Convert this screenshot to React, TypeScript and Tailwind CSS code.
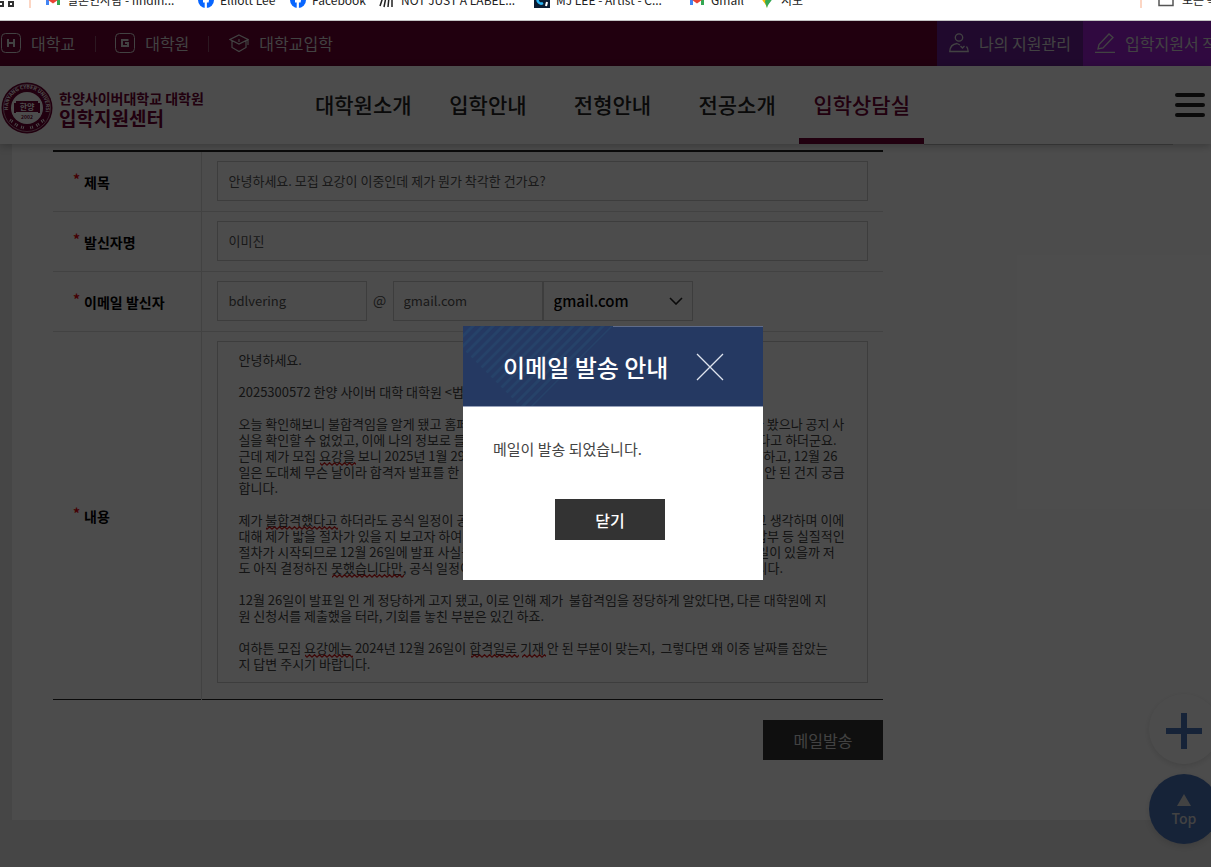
import { useState } from "react";
import type { ReactNode } from "react";

const message = `안녕하세요.

2025300572 한양 사이버 대학 대학원 <법학과> 지원자입니다.

오늘 확인해보니 불합격임을 알게 됐고 홈페이지 공지사항과 게시판까지 모집 요강을 모두 다시 찾아 봤으나 공지 사
실을 확인할 수 없었고, 이에 나의 정보로 들어가 합격 여부 조회를 해보니, 이미 12월에 발표가 되었다고 하더군요.
근데 제가 모집 요강을 보니 2025년 1월 29일에 최종 합격자 발표를 한다고 공식적으로 되어 있기도 하고, 12월 26
일은 도대체 무슨 날이라 합격자 발표를 한 것인지, 왜 공식적인 일정에는 전혀 저에게는 따로 안내가 안 된 건지 궁금
합니다.

제가 불합격했다고 하더라도 공식 일정이 공개되어 있고 그에 맞게 지원자가 모두 준비를 해야 한다고 생각하며 이에
대해 제가 밟을 절차가 있을 지 보고자 하여 이와 같이 연락을 드립니다. 최종 합격자는 모두 등록금 납부 등 실질적인
절차가 시작되므로 12월 26일에 발표 사실을 미리 알았다면, 다른 대학원 등록 같은 방법을 찾아 볼 일이 있을까 저
도 아직 결정하진 못했습니다만, 공식 일정이 어떻게 되는지를 먼저 이렇게 정확하게 확인하고 싶습니다.

12월 26일이 발표일 인 게 정당하게 고지 됐고, 이로 인해 제가  불합격임을 정당하게 알았다면, 다른 대학원에 지
원 신청서를 제출했을 터라, 기회를 놓친 부분은 있긴 하죠.

여하튼 모집 요강에는 2024년 12월 26일이 합격일로 기재 안 된 부분이 맞는지,  그렇다면 왜 이중 날짜를 잡았는
지 답변 주시기 바랍니다.`;

// spelling marks: x, y, width inside the message box
const marks = [
  [103, 121, 36],
  [49, 185, 72],
  [115, 233, 72],
  [88, 313, 48],
  [254, 313, 48],
  [305, 313, 24],
];

function Gmail() {
  return (
    <svg width="16" height="16" viewBox="0 0 16 16" className="shrink-0">
      <path d="M1 3v10h3V7z" fill="#4285f4" />
      <path d="M15 3v10h-3V7z" fill="#34a853" />
      <path d="M1 3l7 5 7-5v3.500l-7 5-7-5z" fill="#ea4335" />
    </svg>
  );
}

function Facebook() {
  return (
    <svg width="16" height="16" viewBox="0 0 16 16" className="shrink-0">
      <circle cx="8" cy="8" r="8" fill="#0866ff" />
      <path d="M6.700 16v-5.500H5V8h1.700V6.600C6.700 4.500 7.700 3.500 9.700 3.500l1.300.1v2.200h-.9c-.9 0-1.200.4-1.200 1.200v1h2.100l-.4 2.500H8.900V16z" fill="#fff" />
    </svg>
  );
}

function Bookmark({ icon, label, width }: { icon: ReactNode; label: string; width: string }) {
  return (
    <a href="#" className="flex shrink-0 items-center gap-[6px]">
      {icon}
      <span className={`${width} whitespace-nowrap`}>{label}</span>
    </a>
  );
}

function BookmarkBar() {
  return (
    <div className="h-[21px] overflow-hidden border-b border-[#c4c4c4] bg-white text-xs text-[#222]">
      <div className="-mt-4 flex h-8 items-center">
        <svg width="14" height="14" viewBox="0 0 14 14" fill="none" stroke="#333" strokeWidth="2" className="shrink-0">
          <path d="M-3 1h6v4h-6zM9 1h4v4H9zM-3 9h6v4h-6zM9 9h4v4H9z" />
        </svg>
        <span className="ml-[15px] h-4 w-[2px] shrink-0 bg-[#fcd6c4]" />
        <div className="ml-[14px] flex items-center gap-4">
          <Bookmark icon={<Gmail />} label="일본인사람 - findin..." width="w-[115px]" />
          <Bookmark icon={<Facebook />} label="Elliott Lee" width="w-[54px]" />
          <Bookmark icon={<Facebook />} label="Facebook" width="w-[51px]" />
          <Bookmark
            icon={
              <svg width="16" height="16" viewBox="0 0 16 16" stroke="#222" strokeWidth="1.500" className="shrink-0">
                <path d="M4 5L1 14M7 5L5 15M10 5L9 15M13 4v11M3 7h12" />
              </svg>
            }
            label="NOT JUST A LABEL..."
            width="w-[117px]"
          />
          <Bookmark
            icon={
              <svg width="16" height="16" viewBox="0 0 16 16" fill="none" className="shrink-0">
                <path d="M0 0h16v16H0z" fill="#0a1c33" />
                <path d="M9 5a3.500 3.500 0 1 0 0 6" stroke="#29b6f6" strokeWidth="2.500" />
                <path d="M13 10l-1 4" stroke="#fff" strokeWidth="2" />
              </svg>
            }
            label="MJ LEE - Artist - C..."
            width="w-[117px]"
          />
          <Bookmark icon={<Gmail />} label="Gmail" width="w-8" />
          <Bookmark
            icon={
              <svg width="16" height="16" viewBox="0 0 16 16" className="shrink-0">
                <path d="M8 0a5.500 5.500 0 0 0-5.500 5.500C2.500 9 7 11 8 16z" fill="#fbbc04" />
                <path d="M8 0a5.500 5.500 0 0 1 5.500 5.500C13.500 9 9 11 8 16L6 10z" fill="#34a853" />
              </svg>
            }
            label="지도"
            width="w-8"
          />
        </div>
        <span className="ml-auto h-4 w-[2px] shrink-0 bg-[#fcd6c4]" />
        <div className="ml-4 flex w-[53px] shrink-0 items-center gap-2 overflow-hidden whitespace-nowrap">
          <svg width="16" height="14" viewBox="0 0 16 14" fill="none" stroke="#555" strokeWidth="1.500" className="shrink-0">
            <path d="M1 1h5l2 2h7v9.500H1z" />
          </svg>
          <span>모든 북마크</span>
        </div>
      </div>
    </div>
  );
}

function LetterIcon({ d }: { d: string }) {
  return (
    <svg width="20" height="20" viewBox="0 0 20 20" fill="none" stroke="currentColor">
      <rect x="0.500" y="0.500" width="19" height="19" rx="4" />
      <path d={d} strokeWidth="2" />
    </svg>
  );
}

function TopBar() {
  return (
    <div className="flex h-[45px] items-center overflow-hidden bg-[#6e0032] text-base whitespace-nowrap text-[#ddd]">
      <a href="#" className="ml-px flex items-center gap-[10px] pb-0.5">
        <LetterIcon d="M7 6v8M13 6v8M7 10h6" />
        대학교
      </a>
      <span className="mr-[19px] ml-5 h-4 w-px bg-[#94506e]" />
      <a href="#" className="flex items-center gap-[10px] pb-0.5">
        <LetterIcon d="M13.500 7H7v6h6v-3h-3" />
        대학원
      </a>
      <span className="mr-5 ml-[19px] h-4 w-px bg-[#94506e]" />
      <a href="#" className="flex items-center gap-[10px] pb-0.5">
        <svg width="20" height="20" viewBox="0 0 20 20" fill="none" stroke="currentColor" strokeWidth="1.200">
          <path d="M10 2l9 4.500-9 4.500-9-4.500zM3 8v6.500l7 4 7-4V8M10 6v3M19 6.500V12" />
        </svg>
        대학교입학
      </a>
      <a href="#" className="ml-auto flex h-full w-[146px] shrink-0 items-center gap-[10px] bg-[#6b2196] pb-0.5 pl-3">
        <svg width="20" height="20" viewBox="0 0 20 20" fill="none" stroke="currentColor" strokeWidth="1.300">
          <circle cx="10" cy="4.500" r="3.700" />
          <path d="M8 10.500C4 11 1 13.500 .8 18.500h18.400c0-2-.7-3.800-1.700-5M8 10.500l3 1.500" />
          <path d="M11.500 13l2 2 2-2" />
        </svg>
        나의 지원관리
      </a>
      <a href="#" className="flex h-full w-32 shrink-0 items-center gap-[10px] overflow-hidden bg-[#a021d7] pb-0.5 pl-3">
        <svg width="20" height="20" viewBox="0 0 20 20" fill="none" stroke="currentColor" strokeWidth="1.300" className="shrink-0">
          <path d="M3 16l1-4.500L14 1l4 3.500L8 15zM0 19.300h20" />
        </svg>
        입학지원서 작성
      </a>
    </div>
  );
}

function Seal() {
  return (
    <svg width="52" height="52" viewBox="0 0 52 52" className="shrink-0">
      <defs>
        <path id="ring-top" d="M7.500 30a19 19 0 1 1 37 0" />
      </defs>
      <circle cx="26" cy="26" r="25.500" fill="#6e0032" />
      <circle cx="26" cy="26" r="23.500" fill="none" stroke="#fff" strokeWidth="0.500" />
      <circle cx="26" cy="26" r="16" fill="#fff" />
      <text fontSize="5" fontWeight="700" fill="#fff">
        <textPath href="#ring-top" startOffset="2">HANYANG CYBER UNIVERSITY</textPath>
      </text>
      <path d="M9 38l3 2M14 42l3 2M20 45l3 1M43 38l-3 2M38 42l-3 2M32 45l-3 1" stroke="#fff" strokeWidth="3" strokeDasharray="1 1" />
      <path d="M15 19h22v2h2v10h-2v-1H15v1h-2V21h2z" fill="#6e0032" />
      <text x="26" y="28" fontSize="8" fontWeight="700" fill="#fff" textAnchor="middle">
        한양
      </text>
      <text x="26" y="37" fontSize="5" fontWeight="700" fill="#6e0032" textAnchor="middle">
        2002
      </text>
    </svg>
  );
}

const menu = ["대학원소개", "입학안내", "전형안내", "전공소개", "입학상담실"];

function Header() {
  return (
    <header className="relative flex h-[78px] bg-white shadow-[0_2px_8px_rgba(0,0,0,0.25)]">
      <a href="#" className="flex w-[301px] shrink-0 items-center gap-[6px] pt-[6px] pl-px font-bold text-[#6e0032]">
        <Seal />
        <span>
          <span className="block text-sm leading-5">한양사이버대학교 대학원</span>
          <span className="block text-[19px] leading-5">입학지원센터</span>
        </span>
      </a>
      <nav className="grid w-[623px] shrink-0 grid-cols-5 text-center text-[21px] font-medium text-[#222]">
        {menu.map((item, i) => (
          <a
            key={item}
            href="#"
            className={
              i === 4
                ? "border-b-[6px] border-[#6e0032] pt-[23px] text-[#6e0032]"
                : "pt-[23px]"
            }
          >
            {item}
          </a>
        ))}
      </nav>
      <div className="-mb-px flex-1 border-b border-[#aaa]" />
      <button type="button" aria-label="전체메뉴" className="mr-[6px] ml-[2px] flex w-[30px] flex-col justify-center gap-[6px]">
        <span className="h-1 w-full rounded bg-[#222]" />
        <span className="h-1 w-full rounded bg-[#222]" />
        <span className="h-1 w-full rounded bg-[#222]" />
      </button>
    </header>
  );
}

function Row({ label, id, children }: { label: string; id: string; children: ReactNode }) {
  return (
    <tr className="border-b border-[#ddd] last:border-[#222]">
      <th scope="row" className="w-[148px] border-r border-[#ddd] pb-[3px] pl-5 text-left text-sm font-bold text-black">
        <label htmlFor={id}>
          <span className="mr-1 align-[3px] text-red-600">*</span>
          {label}
        </label>
      </th>
      <td className="px-[15px] pt-[9px] pb-[10px]">{children}</td>
    </tr>
  );
}

function MailForm() {
  return (
    <form className="w-[830px]" onSubmit={(e) => e.preventDefault()}>
      <table className="w-full border-collapse border-t-2 border-[#222] text-[13px] text-[#555]">
        <tbody>
          <Row label="제목" id="title">
            <input
              id="title"
              className="block h-10 w-full border border-[#ccc] px-[11px] pb-0.5"
              defaultValue="안녕하세요. 모집 요강이 이중인데 제가 뭔가 착각한 건가요?"
            />
          </Row>
          <Row label="발신자명" id="sender">
            <input id="sender" className="block h-10 w-full border border-[#ccc] px-[11px] pb-0.5" defaultValue="이미진" />
          </Row>
          <Row label="이메일 발신자" id="mail-id">
            <div className="flex items-center">
              <input id="mail-id" className="h-10 w-[150px] border border-[#ccc] px-[11px] pb-0.5" defaultValue="bdlvering" />
              <span className="w-[26px] pb-0.5 text-center text-sm">@</span>
              <input aria-label="이메일 도메인" className="h-10 w-[150px] border border-[#ccc] px-[10px] pb-0.5" defaultValue="gmail.com" />
              <div className="relative">
                <select
                  aria-label="도메인 선택"
                  className="h-10 w-[150px] appearance-none border border-[#ccc] px-[10px] text-[15px] font-medium text-black"
                >
                  <option>gmail.com</option>
                  <option>naver.com</option>
                </select>
                <svg width="14" height="8" viewBox="0 0 14 8" fill="none" stroke="#222" strokeWidth="1.600" className="pointer-events-none absolute top-4 right-[10px]">
                  <path d="M1 1l6 6 6-6" />
                </svg>
              </div>
            </div>
          </Row>
          <Row label="내용" id="message">
            <div className="relative mb-[6px]">
              <textarea
                id="message"
                wrap="off"
                spellCheck={false}
                className="block h-[342px] w-full resize-none overflow-hidden border border-[#ccc] px-[21px] py-[10px] leading-4 text-[#444]"
                defaultValue={message}
              />
              <svg className="pointer-events-none absolute inset-0 h-full w-full">
                <defs>
                  <pattern id="wave" y="1" width="5" height="4" patternUnits="userSpaceOnUse">
                    <path d="M-1 4L2.500 .7 6 4" fill="none" stroke="#d01818" strokeWidth="1.200" />
                  </pattern>
                </defs>
                {marks.map(([x, y, w]) => (
                  <rect key={`${x}-${y}`} x={x} y={y} width={w} height="4" fill="url(#wave)" />
                ))}
              </svg>
            </div>
          </Row>
        </tbody>
      </table>
      <div className="mt-5 flex justify-end">
        <button type="submit" className="h-10 w-[120px] bg-[#333] text-base text-[#ddd]">
          메일발송
        </button>
      </div>
    </form>
  );
}

function Modal({ onClose }: { onClose: () => void }) {
  return (
    <div className="absolute inset-0 z-20 flex items-center justify-center bg-black/70 pt-[18px] pl-[15px]">
      <div role="dialog" aria-labelledby="modal-title" className="w-[300px] bg-white">
        <div className="relative flex h-[81px] items-center border-t border-b border-t-[#5f6c8a] border-b-[#98a2ba] bg-[#253962] pl-10">
          <svg width="150" height="80" viewBox="0 0 150 80" className="absolute -top-px left-0">
            <defs>
              <clipPath id="corner">
                <path d="M0 0h150L69 81H58L0 23z" />
              </clipPath>
            </defs>
            <path d="M0 0h150v80H0z" fill="#253962" />
            <g clipPath="url(#corner)" stroke="#264269" strokeWidth="3">
              {Array.from({ length: 15 }, (_, i) => (
                <path key={i} d={`M${12 + i * 10} -2L${i * 10 - 74} 84`} />
              ))}
            </g>
          </svg>
          <h2 id="modal-title" className="relative text-2xl font-medium text-white">
            이메일 발송 안내
          </h2>
          <button type="button" aria-label="닫기" onClick={onClose} className="relative ml-7">
            <svg width="28" height="28" viewBox="0 0 28 28" stroke="#dfe4ee" strokeWidth="1.300">
              <path d="M1 1l26 26M27 1L1 27" />
            </svg>
          </button>
        </div>
        <div className="px-[30px] pt-[30px] pb-10">
          <p className="text-[15px] leading-6 text-[#444]">메일이 발송 되었습니다.</p>
          <div className="mt-[38px] flex justify-center pr-[6px]">
            <button type="button" onClick={onClose} className="h-[41px] w-[110px] bg-[#333] text-base font-medium text-white">
              닫기
            </button>
          </div>
        </div>
      </div>
    </div>
  );
}

export default function App() {
  const [open, setOpen] = useState(true);

  return (
    <div className="flex min-h-screen flex-col bg-white font-['Noto_Sans_CJK_KR','Noto_Sans',sans-serif]">
      <BookmarkBar />
      <div className="relative flex flex-1 flex-col overflow-hidden bg-[#e9e9e9]">
        <TopBar />
        <Header />
        <main className="ml-3 bg-white pt-[6px] pb-[60px] pl-[41px]">
          <MailForm />
        </main>
        <div className="absolute -right-2 bottom-[23px] flex flex-col gap-[10px]">
          <button type="button" aria-label="더보기" className="flex h-[70px] w-[70px] items-center justify-center rounded-full bg-white pt-1 shadow-[0_2px_6px_rgba(0,0,0,0.12)]">
            <svg width="36" height="36" viewBox="0 0 36 36" stroke="#4a75bd" strokeWidth="6">
              <path d="M18 0v36M0 18h36" />
            </svg>
          </button>
          <a href="#" className="flex h-[70px] w-[70px] flex-col items-center justify-center gap-0.5 rounded-full bg-[#4a75bd] pt-1 text-sm font-medium text-[#ddd] shadow-[0_2px_6px_rgba(0,0,0,0.12)]">
            <svg width="14" height="12" viewBox="0 0 14 12" fill="currentColor">
              <path d="M7 0l7 12H0z" />
            </svg>
            Top
          </a>
        </div>
        {open && <Modal onClose={() => setOpen(false)} />}
      </div>
    </div>
  );
}
